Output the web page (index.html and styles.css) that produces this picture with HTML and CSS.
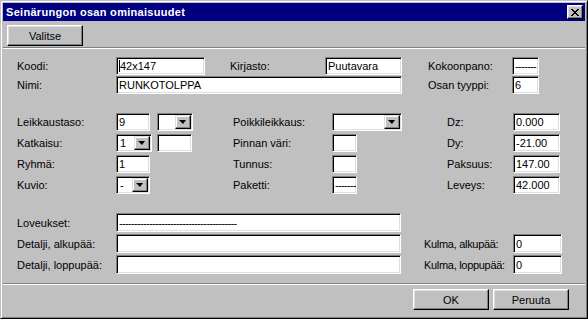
FILE: index.html
```html
<!DOCTYPE html>
<html lang="fi">
<head>
    <meta charset="UTF-8">
    <title>Seinärungon osan ominaisuudet</title>
    <link rel="stylesheet" href="styles.css">
</head>
<body>
    <div class="window">
        <div class="titlebar">
            <span class="title">Seinärungon osan ominaisuudet</span>
            <span class="close-btn">
                <svg width="8" height="7" viewBox="0 0 8 7" shape-rendering="crispEdges">
                    <path d="M0 0h2v1H0zM6 0h2v1H6zM1 1h2v1H1zM5 1h2v1H5zM2 2h4v1H2zM3 3h2v1H3zM2 4h4v1H2zM1 5h2v1H1zM5 5h2v1H5zM0 6h2v1H0zM6 6h2v1H6z" fill="#000"/>
                </svg>
            </span>
        </div>

        <div class="toolbar">
            <span class="btn">Valitse</span>
        </div>
        <div class="sep"></div>

        <div class="form">
            <!-- tunnistetiedot -->
            <div class="section sec-top">
                <div class="row">
                    <span class="lbl w99">Koodi:</span>
                    <span class="field w89"><span class="caret"></span>42x147</span>
                    <span class="lbl w95 ml25">Kirjasto:</span>
                    <span class="field w77">Puutavara</span>
                    <span class="lbl w84 ml26">Kokoonpano:</span>
                    <span class="field w27 dashes">-------</span>
                </div>
                <div class="row">
                    <span class="lbl w99">Nimi:</span>
                    <span class="field w286">RUNKOTOLPPA</span>
                    <span class="lbl w84 ml26">Osan tyyppi:</span>
                    <span class="field w27">6</span>
                </div>
            </div>

            <!-- mitat ja ominaisuudet -->
            <div class="section sec-mid">
                <div class="row">
                    <span class="lbl w99">Leikkaustaso:</span>
                    <span class="cell w117">
                        <span class="field w34">9</span>
                        <span class="field combo w36 ml7"><span class="val"></span><span class="arrow"></span></span>
                    </span>
                    <span class="lbl w99">Poikkileikkaus:</span>
                    <span class="cell w115">
                        <span class="field combo w70"><span class="val"></span><span class="arrow"></span></span>
                    </span>
                    <span class="lbl w66">Dz:</span>
                    <span class="field w47">0.000</span>
                </div>
                <div class="row">
                    <span class="lbl w99">Katkaisu:</span>
                    <span class="cell w117">
                        <span class="field combo w36"><span class="val">1</span><span class="arrow"></span></span>
                        <span class="field w35 ml5"></span>
                    </span>
                    <span class="lbl w99">Pinnan väri:</span>
                    <span class="cell w115">
                        <span class="field w25"></span>
                    </span>
                    <span class="lbl w66">Dy:</span>
                    <span class="field w47">-21.00</span>
                </div>
                <div class="row">
                    <span class="lbl w99">Ryhmä:</span>
                    <span class="cell w117">
                        <span class="field w34">1</span>
                    </span>
                    <span class="lbl w99">Tunnus:</span>
                    <span class="cell w115">
                        <span class="field w25"></span>
                    </span>
                    <span class="lbl w66">Paksuus:</span>
                    <span class="field w47">147.00</span>
                </div>
                <div class="row">
                    <span class="lbl w99">Kuvio:</span>
                    <span class="cell w117">
                        <span class="field combo w34"><span class="val">-</span><span class="arrow"></span></span>
                    </span>
                    <span class="lbl w99">Paketti:</span>
                    <span class="cell w115">
                        <span class="field w25 dashes">-------</span>
                    </span>
                    <span class="lbl w66">Leveys:</span>
                    <span class="field w47">42.000</span>
                </div>
            </div>

            <!-- detaljit -->
            <div class="section sec-bottom">
                <div class="row">
                    <span class="lbl w99">Loveukset:</span>
                    <span class="field w285 dashes">---------------------------------------</span>
                </div>
                <div class="row">
                    <span class="lbl w99">Detalji, alkupää:</span>
                    <span class="field w285"></span>
                    <span class="lbl tight w89 ml23">Kulma, alkupää:</span>
                    <span class="field w49">0</span>
                </div>
                <div class="row">
                    <span class="lbl w99">Detalji, loppupää:</span>
                    <span class="field w285"></span>
                    <span class="lbl tight w89 ml23">Kulma, loppupää:</span>
                    <span class="field w49">0</span>
                </div>
            </div>
        </div>

        <div class="sep"></div>
        <div class="footer">
            <span class="btn">OK</span>
            <span class="btn">Peruuta</span>
        </div>
    </div>
</body>
</html>
```

FILE: styles.css
```css
* {
    box-sizing: border-box;
}
body {
    margin: 0;
    font-family: "Liberation Sans", Arial, sans-serif;
    font-size: 11px;
    color: #000;
    background: #c0c0c0;
}
.window {
    width: 588px;
    height: 319px;
    display: flex;
    flex-direction: column;
    background: #c0c0c0;
    border: 1px solid;
    border-color: #c0c0c0 #000 #000 #c0c0c0;
    box-shadow: inset 1px 1px #fff, inset -1px -1px #808080;
    padding: 2px;
}
.titlebar {
    height: 18px;
    flex-shrink: 0;
    display: flex;
    align-items: center;
    padding: 0 2px 0 3px;
    background: #000080;
}
.title {
    flex: 1;
    color: #fff;
    font-weight: bold;
    font-size: 11px;
    letter-spacing: 0.3px;
}
.close-btn {
    width: 16px;
    height: 14px;
    display: flex;
    align-items: center;
    justify-content: center;
    background: #c0c0c0;
    border: 1px solid;
    border-color: #fff #000 #000 #fff;
    box-shadow: inset -1px -1px #808080, inset 1px 1px #dfdfdf;
}
.close-btn svg {
    display: block;
}
.toolbar {
    height: 26px;
    flex-shrink: 0;
    padding: 4px 4px 1px;
}
.btn {
    width: 76px;
    height: 21px;
    display: flex;
    align-items: center;
    justify-content: center;
    background: #c0c0c0;
    border: 1px solid;
    border-color: #fff #000 #000 #fff;
    box-shadow: inset -1px -1px #808080, inset 1px 1px #dfdfdf;
}
.sep {
    height: 2px;
    flex-shrink: 0;
    border-top: 1px solid #808080;
    border-bottom: 1px solid #fff;
}
.form {
    flex: 1;
    padding: 8px 0 0 14px;
}
.section {
    display: flex;
    flex-direction: column;
}
.section + .section {
    margin-top: 19px;
}
.sec-top {
    gap: 1px;
}
.sec-mid {
    gap: 3px;
}
.sec-bottom {
    gap: 2px;
}
.row {
    display: flex;
    align-items: center;
    height: 18px;
}
.sec-bottom .row {
    height: 19px;
}
.cell {
    display: flex;
    align-items: center;
    height: 100%;
}
.lbl {
    flex-shrink: 0;
    white-space: nowrap;
}
.lbl.tight {
    letter-spacing: -0.3px;
}
.field {
    flex-shrink: 0;
    height: 100%;
    display: flex;
    align-items: center;
    padding: 0 2px;
    background: #fff;
    border: 1px solid;
    border-color: #808080 #fff #fff #808080;
    box-shadow: inset 1px 1px #000, inset -1px -1px #dfdfdf;
    white-space: nowrap;
    overflow: hidden;
}
.caret {
    width: 1px;
    height: 12px;
    background: #000;
}
.dashes {
    letter-spacing: -0.65px;
}
.combo {
    padding: 1px;
}
.combo .val {
    flex: 1;
    padding-left: 2px;
}
.arrow {
    width: 16px;
    height: 100%;
    position: relative;
    background: #c0c0c0;
    border: 1px solid;
    border-color: #dfdfdf #000 #000 #dfdfdf;
    box-shadow: inset -1px -1px #808080, inset 1px 1px #fff;
}
.arrow::after {
    content: "";
    position: absolute;
    left: 3px;
    top: 4px;
    border-left: 4px solid transparent;
    border-right: 3px solid transparent;
    border-top: 4px solid #000;
}
.footer {
    height: 31px;
    flex-shrink: 0;
    display: flex;
    justify-content: flex-end;
    align-items: flex-start;
    gap: 4px;
    padding: 4px 16px 0 0;
}

.w25 { width: 25px; }
.w27 { width: 27px; }
.w34 { width: 34px; }
.w35 { width: 35px; }
.w36 { width: 36px; }
.w47 { width: 47px; }
.w49 { width: 49px; }
.w66 { width: 66px; }
.w70 { width: 70px; }
.w77 { width: 77px; }
.w84 { width: 84px; }
.w89 { width: 89px; }
.w95 { width: 95px; }
.w99 { width: 99px; }
.w115 { width: 115px; }
.w117 { width: 117px; }
.w285 { width: 285px; }
.w286 { width: 286px; }
.ml5 { margin-left: 5px; }
.ml7 { margin-left: 7px; }
.ml23 { margin-left: 23px; }
.ml25 { margin-left: 25px; }
.ml26 { margin-left: 26px; }
```
